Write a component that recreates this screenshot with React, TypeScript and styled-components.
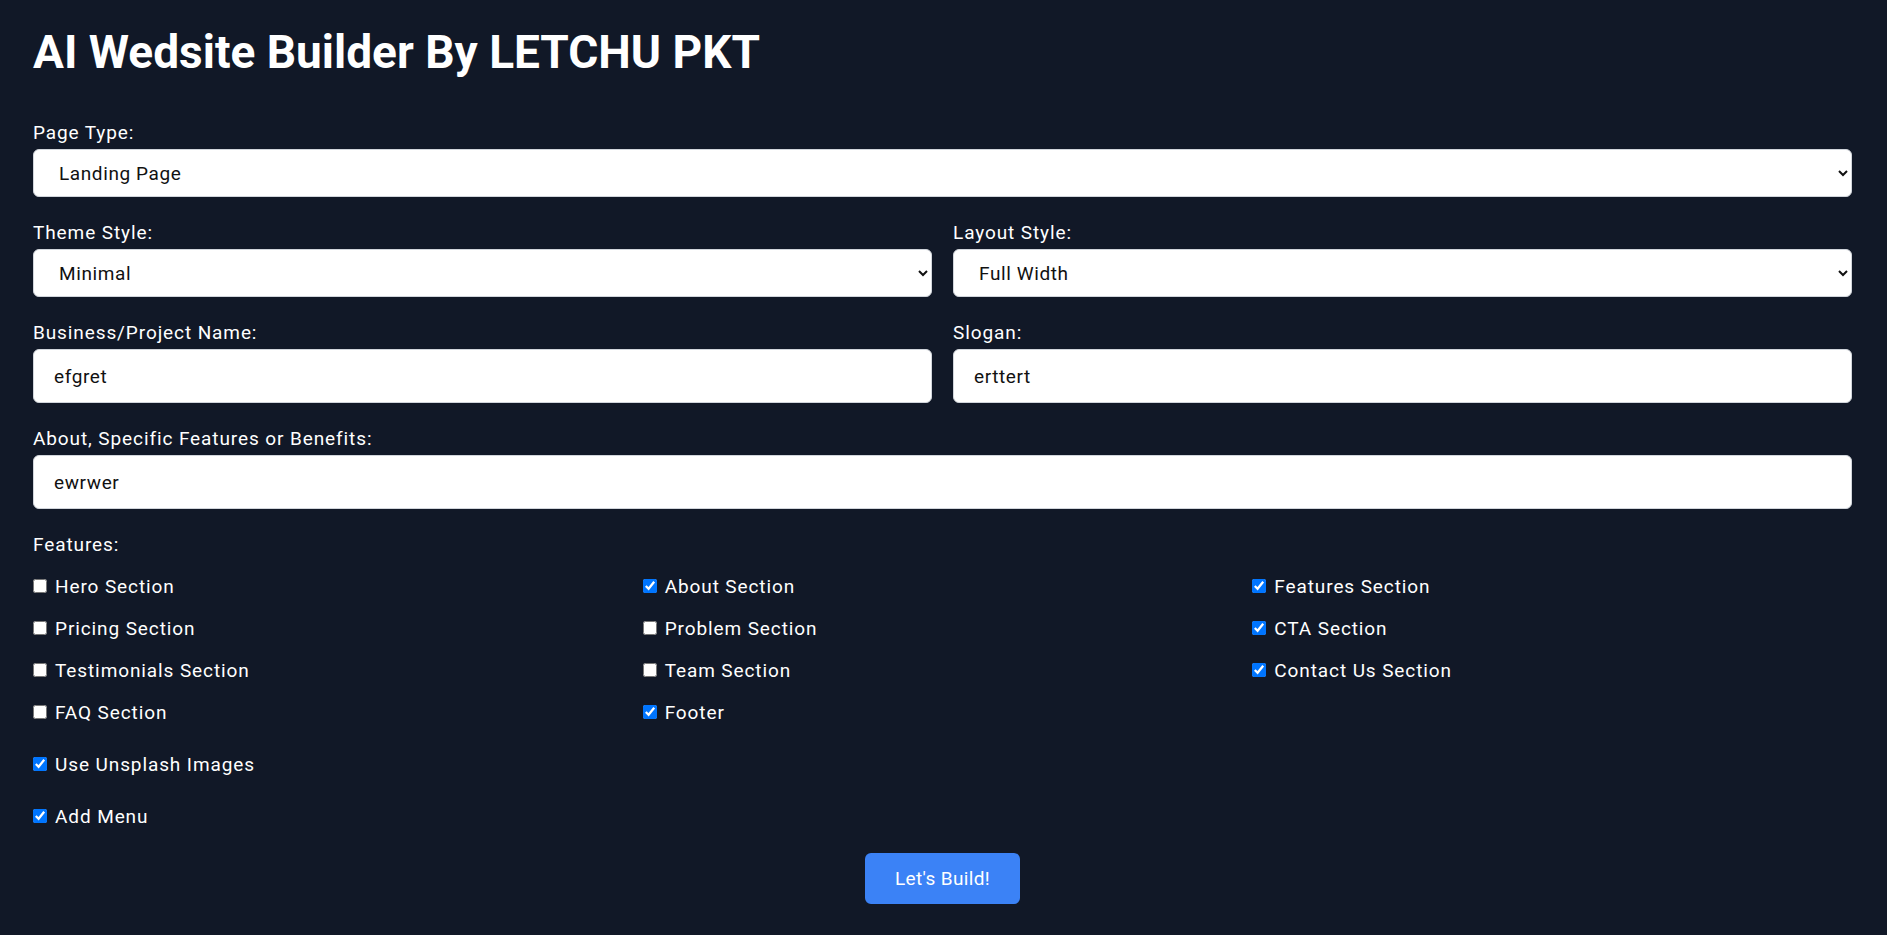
import React, { useState } from 'react';
import styled, { createGlobalStyle } from 'styled-components';

const GlobalStyle = createGlobalStyle`
  html, body {
    margin: 0;
    padding: 0;
    background: #111827;
  }
  body {
    font-family: Roboto, "Liberation Sans", Arial, sans-serif;
    color: #fff;
  }
  * {
    box-sizing: border-box;
  }
`;

const Page = styled.div`
  min-height: 935px;
  background: #111827;
  padding: 24px 35px 30px 33px;
`;

const Title = styled.h1`
  margin: 0 0 41px;
  font-size: 46px;
  line-height: 56px;
  font-weight: 700;
  color: #fff;
`;

const Form = styled.form`
  display: flex;
  flex-direction: column;
  gap: 24px;
`;

const Row = styled.div`
  display: grid;
  grid-template-columns: 1fr 1fr;
  column-gap: 21px;
`;

const Field = styled.div`
  display: flex;
  flex-direction: column;
`;

const Label = styled.label`
  display: block;
  margin-bottom: 4px;
  font-size: 19px;
  line-height: 24px;
  letter-spacing: 0.9px;
  color: #fff;
`;

const Select = styled.select`
  height: 48px;
  width: 100%;
  padding: 0 18px 0 21px;
  font-family: inherit;
  font-size: 19px;
  letter-spacing: 0.6px;
  color: #111;
  background: #fff;
  border: 1px solid #d1d5db;
  border-radius: 6px;
  outline: none;
`;

const Input = styled.input`
  height: 54px;
  width: 100%;
  padding: 0 20px;
  font-family: inherit;
  font-size: 19px;
  letter-spacing: 0.6px;
  color: #111;
  background: #fff;
  border: 1px solid #d1d5db;
  border-radius: 6px;
  outline: none;
`;

const FeatureGrid = styled.div`
  display: grid;
  grid-template-columns: repeat(3, 1fr);
  column-gap: 10px;
  row-gap: 18px;
  margin-top: 14px;
`;

const Option = styled.label<{ $spaced?: boolean }>`
  display: flex;
  align-items: flex-start;
  gap: 8px;
  margin-top: ${(p) => (p.$spaced ? '4px' : '0')};
  font-size: 19px;
  line-height: 24px;
  letter-spacing: 0.9px;
  color: #fff;
  cursor: pointer;

  input {
    width: 14px;
    height: 14px;
    margin: 4px 0 0 0;
    flex: none;
  }
`;

const BuildButton = styled.button`
  align-self: center;
  width: 155px;
  height: 51px;
  border: none;
  border-radius: 6px;
  background: #3b82f6;
  color: #fff;
  font-family: inherit;
  font-size: 19px;
  letter-spacing: 0.35px;
  cursor: pointer;
`;

const featureList = [
  'Hero Section',
  'About Section',
  'Features Section',
  'Pricing Section',
  'Problem Section',
  'CTA Section',
  'Testimonials Section',
  'Team Section',
  'Contact Us Section',
  'FAQ Section',
  'Footer',
];

const App: React.FC = () => {
  const [checked, setChecked] = useState<Record<string, boolean>>({
    'About Section': true,
    'Features Section': true,
    'CTA Section': true,
    'Contact Us Section': true,
    Footer: true,
  });
  const [unsplash, setUnsplash] = useState(true);
  const [menu, setMenu] = useState(true);

  const toggle = (name: string) =>
    setChecked((c) => ({ ...c, [name]: !c[name] }));

  return (
    <Page>
      <GlobalStyle />
      <Title>AI Wedsite Builder By LETCHU PKT</Title>
      <Form onSubmit={(e) => e.preventDefault()}>
        <Field>
          <Label>Page Type:</Label>
          <Select defaultValue="landing">
            <option value="landing">Landing Page</option>
            <option value="portfolio">Portfolio</option>
            <option value="blog">Blog</option>
          </Select>
        </Field>

        <Row>
          <Field>
            <Label>Theme Style:</Label>
            <Select defaultValue="minimal">
              <option value="minimal">Minimal</option>
              <option value="modern">Modern</option>
              <option value="classic">Classic</option>
            </Select>
          </Field>
          <Field>
            <Label>Layout Style:</Label>
            <Select defaultValue="full">
              <option value="full">Full Width</option>
              <option value="boxed">Boxed</option>
            </Select>
          </Field>
        </Row>

        <Row>
          <Field>
            <Label>Business/Project Name:</Label>
            <Input defaultValue="efgret" />
          </Field>
          <Field>
            <Label>Slogan:</Label>
            <Input defaultValue="erttert" />
          </Field>
        </Row>

        <Field>
          <Label>About, Specific Features or Benefits:</Label>
          <Input defaultValue="ewrwer" />
        </Field>

        <Field>
          <Label>Features:</Label>
          <FeatureGrid>
            {featureList.map((f) => (
              <Option key={f}>
                <input
                  type="checkbox"
                  checked={!!checked[f]}
                  onChange={() => toggle(f)}
                />
                {f}
              </Option>
            ))}
          </FeatureGrid>
        </Field>

        <Option $spaced>
          <input
            type="checkbox"
            checked={unsplash}
            onChange={() => setUnsplash(!unsplash)}
          />
          Use Unsplash Images
        </Option>

        <Option $spaced>
          <input type="checkbox" checked={menu} onChange={() => setMenu(!menu)} />
          Add Menu
        </Option>

        <BuildButton type="submit">Let&apos;s Build!</BuildButton>
      </Form>
    </Page>
  );
};

export default App;
